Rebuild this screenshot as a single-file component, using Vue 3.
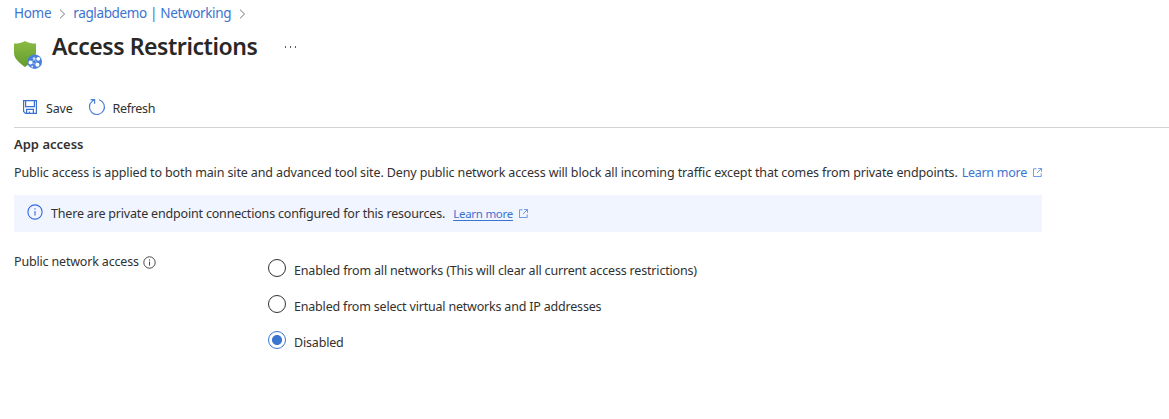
<script setup>
const options = [
  { id: 'all', label: 'Enabled from all networks (This will clear all current access restrictions)' },
  { id: 'select', label: 'Enabled from select virtual networks and IP addresses' },
  { id: 'off', label: 'Disabled' },
]
const selected = 'off'
</script>

<template>
  <main class="page">
    <nav class="crumbs">
      <a class="crumb home">Home</a>
      <svg class="chev" width="7" height="10" viewBox="0 0 7 10"><path d="M1 .7 5.6 5 1 9.3" /></svg>
      <a class="crumb site">raglabdemo | Networking</a>
      <svg class="chev" width="7" height="10" viewBox="0 0 7 10"><path d="M1 .7 5.6 5 1 9.3" /></svg>
    </nav>

    <header class="title">
      <svg class="shield" width="30" height="30" viewBox="0 0 30 30">
        <defs>
          <linearGradient id="leaf" x1="0" y1="0" x2="0" y2="1">
            <stop offset="0" stop-color="#8abb45" />
            <stop offset="1" stop-color="#649c2c" />
          </linearGradient>
        </defs>
        <path d="M11 1C14.4 3 17.8 3.5 22 3.6V13c0 6.300-6.500 10.700-11 14C6.500 23.700 0 19.300 0 13V3.600C4.200 3.500 7.600 3 11 1Z" fill="url(#leaf)" />
        <circle cx="20.700" cy="21.700" r="7.300" fill="#4a7fdb" />
        <path d="m16.500 22.500 4-3 4-1.500M20.500 19.500l3.500 5.500-7.500-2.500" fill="none" stroke="#a9c6f5" stroke-width=".8" />
        <circle cx="16.500" cy="22.500" r="2" fill="#fff" />
        <circle cx="20" cy="18.500" r="1.200" fill="#dce8fc" />
        <circle cx="24.300" cy="18.800" r="1.900" fill="#fff" />
        <circle cx="23.400" cy="24.800" r="2" fill="#fff" />
        <circle cx="18.300" cy="26.600" r="1" fill="#dce8fc" />
      </svg>
      <h1>Access Restrictions</h1>
      <span class="more"><i></i><i></i><i></i></span>
    </header>

    <div class="toolbar">
      <svg class="save" width="14" height="14" viewBox="0 0 14 14">
        <path d="M.6.600h12.800v12.800H2.500L.6 11.500ZM2.600.600v6h8.800v-6M3.600 13.400V9.400h6.800v4M6.400 13.400v-2" />
      </svg>
      <span class="cmd-save">Save</span>
      <svg class="refresh" width="18" height="18" viewBox="0 0 18 18">
        <path d="M11.100 1.800A7.500 7.500 0 1 1 4.300 3.100L6.200 1.900M2.600 1.700h4v4" />
      </svg>
      <span class="cmd-refresh">Refresh</span>
    </div>

    <h2>App access</h2>
    <p class="intro">
      <span class="intro-text">Public access is applied to both main site and advanced tool site. Deny public network access will block all incoming traffic except that comes from private endpoints.</span>
      <a class="learn">Learn more</a>
      <svg class="ext" width="9" height="9" viewBox="0 0 10 10"><path d="M4 .9H.5v8.600h8.600V6M5.800.500h3.700v3.700M9.300.700 4.500 5.500" /></svg>
    </p>

    <div class="banner">
      <svg class="info" width="16" height="16" viewBox="0 0 16 16">
        <circle cx="8" cy="8" r="7.100" /><path d="M8 6.900v4.600M8 4.300v1.300" />
      </svg>
      <span class="banner-text">There are private endpoint connections configured for this resources.</span>
      <a class="learn-small">Learn more</a>
      <svg class="ext" width="9" height="9" viewBox="0 0 10 10"><path d="M4 .9H.5v8.600h8.600V6M5.800.500h3.700v3.700M9.300.700 4.500 5.500" /></svg>
    </div>

    <section class="field">
      <div class="label">
        <span>Public network access</span>
        <svg class="hint" width="13" height="13" viewBox="0 0 13 13">
          <circle cx="6.500" cy="6.500" r="5.700" /><path d="M6.500 5.600v4M6.500 3.400v1.200" />
        </svg>
      </div>
      <div class="options">
        <div v-for="o in options" :key="o.id" class="option">
          <span class="radio" :class="{ on: o.id === selected }"></span>
          <span class="option-text" :class="o.id">{{ o.label }}</span>
        </div>
      </div>
    </section>
  </main>
</template>

<style>
body { background: #fff; }
</style>

<style scoped>
.page {
  height: 419px;
  box-sizing: border-box;
  padding-left: 14px;
  overflow: hidden;
  background: #fff;
  color: #323130;
  font: 12.5px/18px "Noto Sans", "Open Sans", sans-serif;
  letter-spacing: -.175px;
  white-space: nowrap;
}
svg { flex: none; fill: none; }
.crumbs { display: flex; align-items: center; height: 27px; color: #3b73d1; font-size: 13.5px; letter-spacing: -.36px; }
.crumb { margin-top: -1px; }
.chev { margin-top: 1px; stroke: #77797c; stroke-width: 1; }
.crumb.home { margin-right: 8px; letter-spacing: -.3px; }
.crumb.site { margin-left: 7px; margin-right: 8px; }
.title { display: flex; height: 66px; }
.shield { margin-top: 13px; }
h1 { width: 206px; margin: 1px 0 0 8px; font-size: 23px; line-height: 36px; font-weight: 600; letter-spacing: -.43px; color: #292827; }
.more { display: flex; gap: 4px; margin: 19px 0 0 27px; }
.more i { width: 1px; height: 2px; background: #5d5c5b; }
.toolbar { display: flex; height: 34px; border-bottom: 1px solid #d2d2d2; line-height: 31px; }
.cmd-save { width: 27px; }
.save { margin: 7px 9px 0 9px; stroke: #3b70d3; stroke-width: 1.2; }
.refresh { margin: 5px 7px 0 14.5px; stroke: #4b7fd8; stroke-width: 1.2; }
.cmd-refresh { letter-spacing: -.3px; }
h2 { margin: 6px 0 0; font-size: 13px; line-height: 20px; font-weight: 600; letter-spacing: 0; }
.intro { display: flex; margin: 10px 0 0; height: 19px; }
.intro-text { letter-spacing: -.126px; }
.learn { margin-left: 4px; letter-spacing: -.27px; color: #3b73d1; }
.ext { margin: 4px 0 0 6px; stroke: #5b8bdb; stroke-width: 1; }
.banner { display: flex; width: 1028px; height: 37px; margin-top: 12px; background: #f1f5ff; line-height: 37px; }
.info { margin: 9px 8.5px 0 12.5px; stroke: #3568df; stroke-width: 1.1; }
.banner-text { letter-spacing: -.183px; }
.learn-small { margin-left: 8px; color: #3b73d1; font-size: 11.5px; letter-spacing: -.27px; text-decoration: underline; text-underline-offset: 2px; }
.banner .ext { margin-top: 14px; }
.field { display: flex; margin-top: 21px; }
.label { display: flex; width: 254px; }
.hint { margin: 3px 0 0 4px; stroke: #484644; stroke-width: 1; }
.options { display: flex; flex-direction: column; gap: 16px; margin-top: 6px; }
.option { display: flex; height: 20px; line-height: 23px; }
.option-text.select { letter-spacing: -.195px; }
.radio { box-sizing: border-box; width: 18px; height: 18px; margin-right: 8px; border: 1px solid #323130; border-radius: 50%; }
.radio.on { border-color: #3b73d1; background: radial-gradient(circle, #3b73d1 4.600px, transparent 5.400px); }
</style>
